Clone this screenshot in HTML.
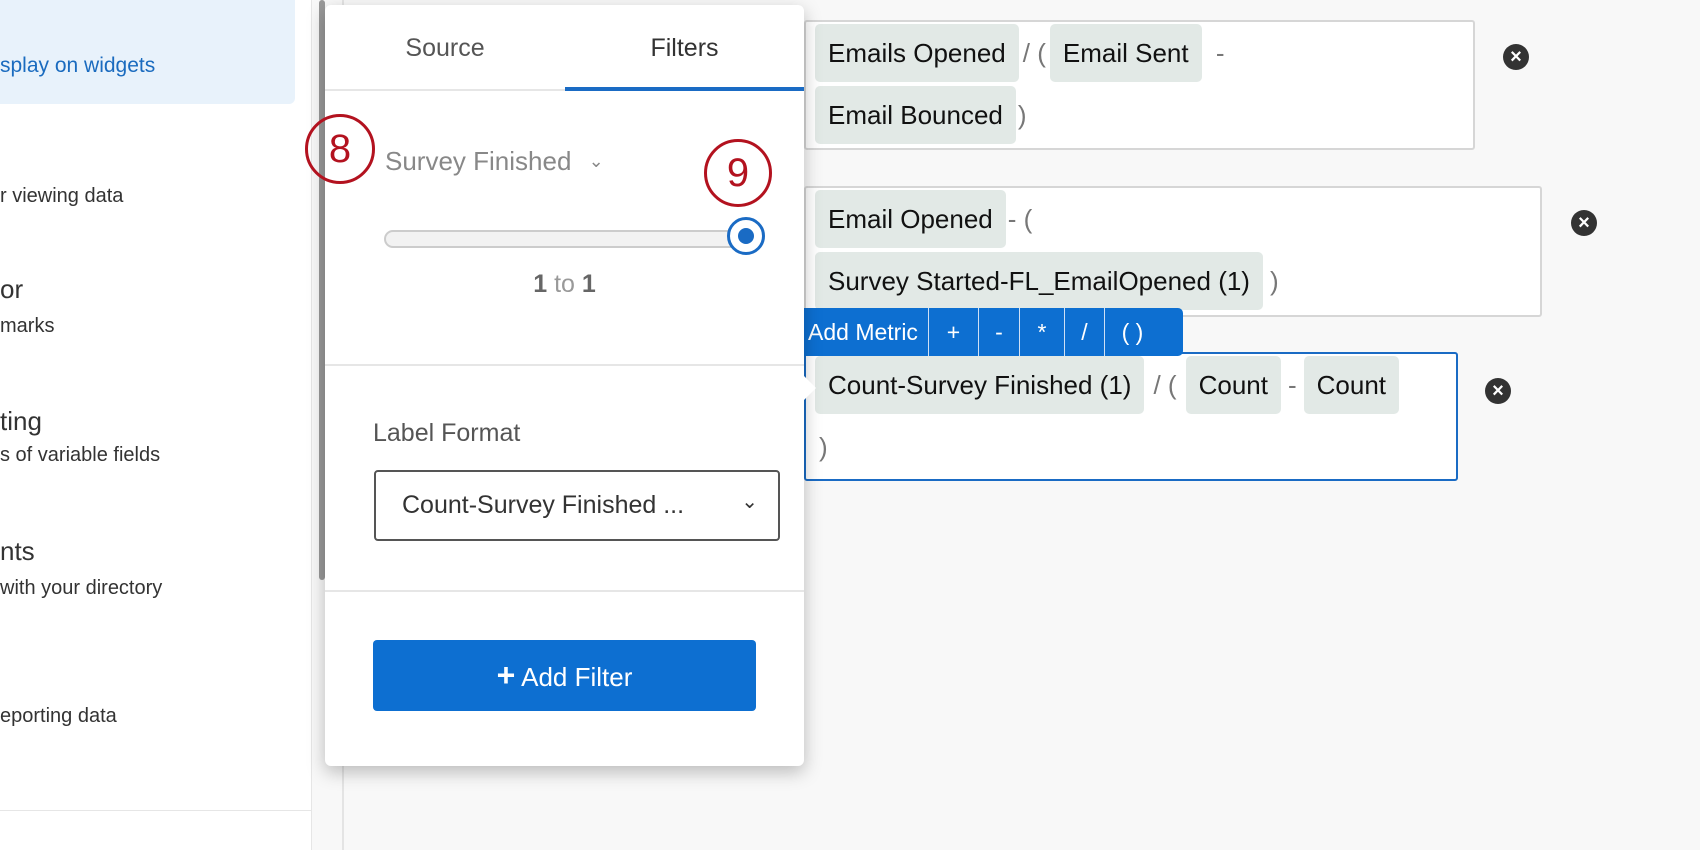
<!DOCTYPE html>
<html><head><meta charset="utf-8"><style>
*{box-sizing:border-box;margin:0;padding:0}
body{width:1700px;height:850px;overflow:hidden;background:#f8f8f8;font-family:"Liberation Sans",Arial,sans-serif;position:relative;color:#222}
.a{position:absolute}
.side{left:0;top:0;width:312px;height:850px;background:#fff;border-right:1px solid #e6e6e6}
.lt{position:absolute;white-space:nowrap;color:#333}
.box{position:absolute;background:#fff;border:2px solid #d6d6d6;border-radius:3px;padding:2px 0 0 9px;font-size:26px;line-height:58px}
.chip{display:inline-block;vertical-align:top;background:#e2e9e6;border-radius:5px;height:58px;line-height:58px;padding:0 13px;color:#111;white-space:nowrap;margin-bottom:4px}
.op{display:inline-block;vertical-align:top;color:#777;margin:0 7px;white-space:pre}
.x{position:absolute;width:26px;height:26px;border-radius:50%;background:#333;color:#fff;font-size:20px;line-height:26px;text-align:center;font-weight:bold}
.circ{position:absolute;border:3px solid #b3121f;border-radius:50%;color:#b3121f;text-align:center;font-size:40px}
</style></head><body>
<div class="a side">
 <div class="a" style="left:0;top:0;width:295px;height:104px;background:#e8f2fb;border-radius:0 0 6px 0"></div>
 <div class="lt" style="left:0;top:54px;font-size:21px;color:#1a6bbf">splay on widgets</div>
 <div class="lt" style="left:0;top:185px;font-size:20px">r viewing data</div>
 <div class="lt" style="left:0;top:274px;font-size:26px">or</div>
 <div class="lt" style="left:0;top:315px;font-size:20px">marks</div>
 <div class="lt" style="left:0;top:406px;font-size:26px">ting</div>
 <div class="lt" style="left:0;top:444px;font-size:20px">s of variable fields</div>
 <div class="lt" style="left:0;top:536px;font-size:26px">nts</div>
 <div class="lt" style="left:0;top:577px;font-size:20px">with your directory</div>
 <div class="lt" style="left:0;top:705px;font-size:20px">eporting data</div>
 <div class="a" style="left:0;top:810px;width:312px;height:1px;background:#e6e6e6"></div>
</div>
<div class="a" style="left:319px;top:0;width:6px;height:580px;background:#999;border-radius:3px"></div>
<div class="a" style="left:342px;top:0;width:2px;height:850px;background:#e4e4e4"></div>

<div class="box" style="left:804px;top:20px;width:671px;height:130px"><span class="chip">Emails Opened</span><span class="op" style="margin:0 4px">/ (</span><span class="chip">Email Sent</span><span class="op"> -</span><br><span class="chip">Email Bounced</span><span class="op" style="margin-left:2px">)</span></div>
<div class="x" style="left:1503px;top:44px">×</div>

<div class="box" style="left:804px;top:186px;width:738px;height:131px"><span class="chip">Email Opened</span><span class="op" style="margin-left:2px">- (</span><br><span class="chip">Survey Started-FL_EmailOpened (1)</span><span class="op">)</span></div>
<div class="x" style="left:1571px;top:210px">×</div>

<div class="box" style="left:804px;top:352px;width:654px;height:129px;border-color:#1a6bc4"><span class="chip">Count-Survey Finished (1)</span><span class="op" style="margin:0 9px">/ (</span><span class="chip">Count</span><span class="op">-</span><span class="chip">Count</span><br><span class="op" style="margin-left:4px">)</span></div>
<div class="x" style="left:1485px;top:378px">×</div>

<div class="a" style="left:804px;top:308px;height:48px;width:379px;background:#0d6fd1;border-radius:0 5px 5px 0;color:#fff;font-size:23px;line-height:48px;display:flex">
 <span style="padding:0 10px 0 4px;border-right:1px solid #cfe0f5">Add Metric</span>
 <span style="width:50px;text-align:center;border-right:1px solid #cfe0f5">+</span>
 <span style="width:41px;text-align:center;border-right:1px solid #cfe0f5">-</span>
 <span style="width:45px;text-align:center;border-right:1px solid #cfe0f5">*</span>
 <span style="width:40px;text-align:center;border-right:1px solid #cfe0f5">/</span>
 <span style="width:55px;text-align:center">( )</span>
</div>

<div class="a" style="left:325px;top:5px;width:479px;height:761px;background:#fff;border-radius:6px;box-shadow:0 6px 18px rgba(0,0,0,.25)">
 <div class="a" style="left:0;top:0;width:240px;height:86px;text-align:center;line-height:86px;font-size:25px;color:#555">Source</div>
 <div class="a" style="left:240px;top:0;width:239px;height:86px;text-align:center;line-height:86px;font-size:25px;color:#333">Filters</div>
 <div class="a" style="left:0;top:84px;width:479px;height:2px;background:#e6e6e6"></div>
 <div class="a" style="left:240px;top:82px;width:239px;height:4px;background:#1a6bc4"></div>
 <div class="a" style="left:60px;top:141px;font-size:26px;color:#888">Survey Finished <span style="font-size:18px;position:relative;top:-3px;margin-left:10px">&#8964;</span></div>
 <div class="a" style="left:59px;top:225px;width:362px;height:18px;border:2px solid #ccc;border-radius:9px;background:#f2f2f2"></div>
 <div class="a" style="left:402px;top:212px;width:38px;height:38px;border:3px solid #1a6bc4;border-radius:50%;background:#fff"><div style="margin:8px auto;width:16px;height:16px;border-radius:50%;background:#1a6bc4"></div></div>
 <div class="a" style="left:0;top:265px;width:479px;text-align:center;font-size:25px;color:#666"><b>1</b> <span style="color:#999">to</span> <b>1</b></div>
 <div class="a" style="left:0;top:359px;width:479px;height:2px;background:#e6e6e6"></div>
 <div class="a" style="left:48px;top:414px;font-size:25px;color:#555">Label Format</div>
 <div class="a" style="left:49px;top:465px;width:406px;height:71px;border:2px solid #555;border-radius:4px;font-size:25px;line-height:67px;padding-left:26px;color:#333">Count-Survey Finished ...<span style="position:absolute;right:20px;top:-3px;font-size:20px">&#8964;</span></div>
 <div class="a" style="left:0;top:585px;width:479px;height:2px;background:#e6e6e6"></div>
 <div class="a" style="left:48px;top:635px;width:383px;height:71px;background:#0d6fd1;border-radius:4px;color:#fff;font-size:26px;line-height:71px;text-align:center"><b style="font-size:32px">+</b> Add Filter</div>
</div>
<div class="a" style="left:804px;top:376px;width:0;height:0;border:12px solid transparent;border-left-color:#fff"></div>

<div class="circ" style="left:305px;top:114px;width:70px;height:70px;line-height:64px">8</div>
<div class="circ" style="left:704px;top:139px;width:68px;height:68px;line-height:62px">9</div>
</body></html>
